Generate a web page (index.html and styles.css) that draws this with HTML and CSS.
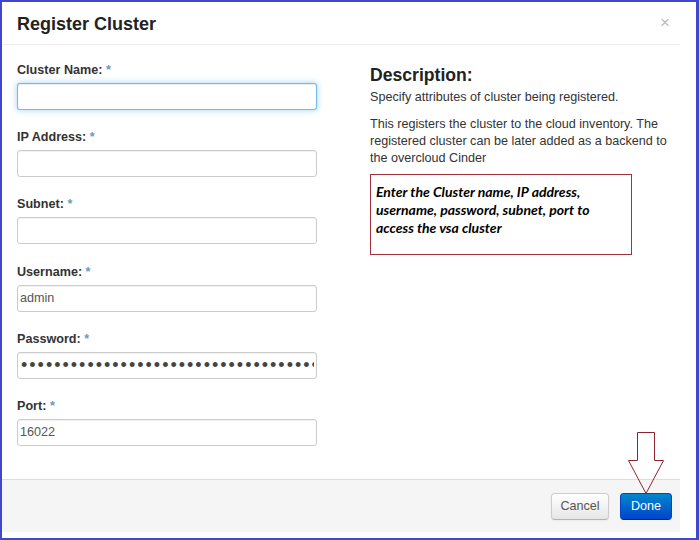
FILE: index.html
```html
<!DOCTYPE html>
<html lang="en">
<head>
<meta charset="utf-8">
<title>Register Cluster</title>
<link rel="stylesheet" href="styles.css">
</head>
<body>
<div class="frame">
  <div class="modal">
    <div class="modal-header">
      <h3 class="modal-title">Register Cluster</h3>
      <button class="close" type="button">×</button>
    </div>
    <div class="modal-body">
      <form class="fields">
        <div class="field">
          <label class="field-label">Cluster Name: <span class="req">*</span></label>
          <input class="field-input is-focused" type="text">
        </div>
        <div class="field">
          <label class="field-label">IP Address: <span class="req">*</span></label>
          <input class="field-input" type="text">
        </div>
        <div class="field">
          <label class="field-label">Subnet: <span class="req">*</span></label>
          <input class="field-input" type="text">
        </div>
        <div class="field">
          <label class="field-label">Username: <span class="req">*</span></label>
          <input class="field-input" type="text" value="admin">
        </div>
        <div class="field">
          <label class="field-label">Password: <span class="req">*</span></label>
          <input class="field-input field-password" type="password" value="passwordpasswordpasswordpasswordpassword">
        </div>
        <div class="field">
          <label class="field-label">Port: <span class="req">*</span></label>
          <input class="field-input" type="text" value="16022">
        </div>
      </form>
      <div class="desc">
        <h4 class="desc-title">Description:</h4>
        <p class="desc-text">Specify attributes of cluster being registered.</p>
        <p class="desc-text desc-text-last">This registers the cluster to the cloud inventory. The registered cluster can be later added as a backend to the overcloud Cinder</p>
        <div class="note">Enter the Cluster name, IP address, username, password, subnet, port to access the vsa cluster</div>
      </div>
    </div>
    <div class="modal-footer">
      <button class="btn btn-default" type="button">Cancel</button>
      <button class="btn btn-primary" type="button">Done</button>
    </div>
  </div>
  <svg class="arrow" width="40" height="66" viewBox="0 0 40 66">
    <polygon points="9.5,0.5 26.5,0.5 26.5,28.5 35.5,28.5 18,61.5 0.5,28.5 9.5,28.5" fill="none" stroke="#8e2433" stroke-width="1"/>
  </svg>
</div>
</body>
</html>
```
FILE: styles.css
```css
html, body {
  margin: 0;
  padding: 0;
  background: #fff;
}

body {
  font-family: "Liberation Sans", Arial, sans-serif;
  color: #333;
}

.frame {
  position: relative;
  box-sizing: border-box;
  width: 699px;
  height: 540px;
  border: 2px solid #3f48cc;
  border-right-width: 3px;
  background: #fff;
  overflow: hidden;
}

.modal {
  width: 678px;
  height: 530px;
  display: flex;
  flex-direction: column;
  background: #fff;
}

.modal-header {
  display: flex;
  align-items: center;
  justify-content: space-between;
  height: 42px;
  padding: 0 10px 0 15px;
  border-bottom: 1px solid #eee;
  flex: none;
}

.modal-title {
  margin: 1px 0 0;
  font-size: 18px;
  line-height: 20px;
  font-weight: bold;
  color: #222;
}

.close {
  border: 0;
  background: none;
  padding: 0;
  margin: 0;
  font-family: "Liberation Sans", Arial, sans-serif;
  font-size: 17px;
  line-height: 20px;
  color: #bbb;
}

.modal-body {
  flex: 1;
  display: flex;
  padding: 17px 8px 0 15px;
}

.fields {
  width: 300px;
  margin: 0 53px 0 0;
  flex: none;
}

.field {
  display: flex;
  flex-direction: column;
  margin-bottom: 19.2px;
}

.field-label {
  font-size: 12.6px;
  line-height: 16px;
  font-weight: bold;
  color: #333;
  margin-bottom: 5px;
}

.req {
  color: #6c9bb9;
  font-weight: bold;
}

.field-input {
  box-sizing: border-box;
  width: 300px;
  height: 27px;
  margin: 0;
  padding: 0 2px;
  border: 1px solid #ccc;
  border-radius: 3px;
  background: #fff;
  font-family: "Liberation Sans", Arial, sans-serif;
  font-size: 12.6px;
  color: #555;
  box-shadow: inset 0 1px 1px rgba(0, 0, 0, 0.06);
  outline: none;
}

.field-input.is-focused {
  border-color: rgba(82, 168, 236, 0.8);
  box-shadow: inset 0 1px 1px rgba(0, 0, 0, 0.075), 0 0 6px rgba(82, 168, 236, 0.55);
}

.field-password {
  padding-left: 3px;
  font-size: 18px;
  letter-spacing: 2px;
  color: #444;
}

.desc {
  flex: 1;
  padding-top: 3px;
}

.desc-title {
  margin: 0 0 4px;
  font-size: 17.6px;
  line-height: 20px;
  font-weight: bold;
  color: #222;
}

.desc-text {
  margin: 0 0 10px;
  font-size: 12.6px;
  line-height: 17px;
  color: #333;
}

.desc-text-last {
  margin-bottom: 7px;
}

.note {
  box-sizing: border-box;
  width: 262px;
  height: 81px;
  margin-top: 0;
  padding: 8px 5px 0 5px;
  border: 1px solid #a3303e;
  font-family: Lato, "Open Sans", sans-serif;
  font-weight: bold;
  font-style: italic;
  font-size: 14px;
  line-height: 18px;
  color: #000;
}

.modal-footer {
  flex: none;
  display: flex;
  justify-content: flex-end;
  gap: 11px;
  height: 53px;
  box-sizing: border-box;
  padding: 13px 8px 0 15px;
  border-top: 1px solid #ddd;
  background: #f5f5f5;
}

.btn {
  box-sizing: border-box;
  height: 27px;
  padding: 0;
  border-radius: 4px;
  font-family: "Liberation Sans", Arial, sans-serif;
  font-size: 12.6px;
  line-height: 25px;
  text-align: center;
}

.btn-default {
  width: 58px;
  color: #555;
  border: 1px solid #ccc;
  border-bottom-color: #b3b3b3;
  background: linear-gradient(#ffffff, #e6e6e6);
  box-shadow: inset 0 1px 0 rgba(255, 255, 255, 0.2), 0 1px 2px rgba(0, 0, 0, 0.05);
}

.btn-primary {
  width: 52px;
  color: #fff;
  border: 1px solid #0044cc;
  border-bottom-color: #002a80;
  background: linear-gradient(#0088cc, #0044cc);
}

.arrow {
  position: absolute;
  left: 626px;
  top: 430px;
}
```
